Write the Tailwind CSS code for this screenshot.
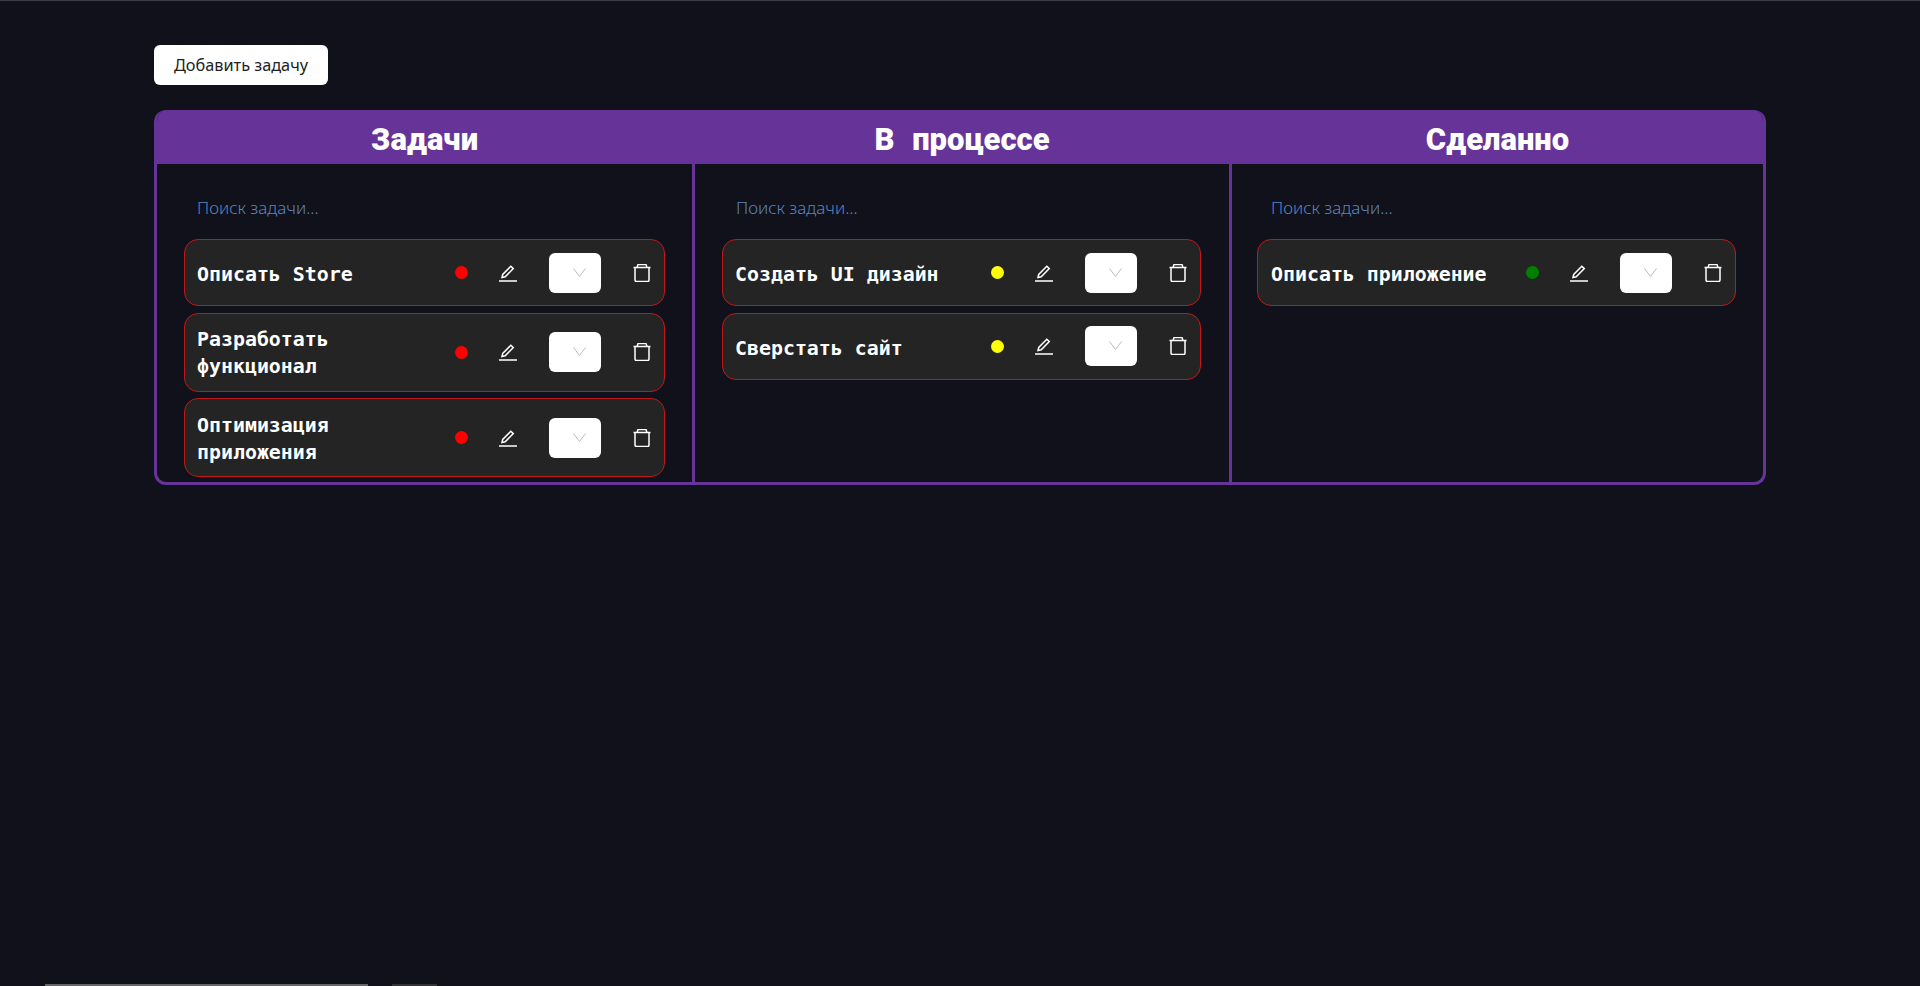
<!DOCTYPE html>
<html lang="ru">

<head>
    <meta charset="UTF-8">
    <meta name="viewport" content="width=device-width, initial-scale=1.0">
    <script src="https://cdn.jsdelivr.net/npm/@tailwindcss/browser@4"></script>
    <title>Задачи</title>
</head>

<body class="relative h-[986px] overflow-hidden bg-[#10111a] font-['Noto_Sans',sans-serif]">
    <div class="h-px bg-[#3d3d45]"></div>
    <main class="pl-[154px] pr-[154px] pt-[44px]">
        <button class="block w-[174px] h-[40px] rounded-[6px] bg-white text-[#222] text-[16.3px]">Добавить задачу</button>

        <section class="mt-[25px] w-[1612px] rounded-[12px] border-[3px] border-[#663399] border-t-0 overflow-hidden">
            <div class="grid grid-cols-[538px_537px_531px] h-[54px] bg-[#663399] text-white text-center font-['Roboto',sans-serif] font-black text-[31px] leading-[60px] [word-spacing:10px]">
                <h2 class="pr-[3px]">Задачи</h2>
                <h2 class="pr-[3px]">В процессе</h2>
                <h2>Сделанно</h2>
            </div>
            <div class="grid grid-cols-[538px_537px_531px] h-[318px]">
                <!-- Задачи -->
                <div class="pl-[27px] pt-[24px] border-r-[3px] border-[#663399]">
                    <input placeholder="Поиск задачи..." class="block w-full h-[38px] pl-[13px] bg-transparent text-[17px] font-light placeholder:text-[#5b84c0] outline-none" />
                    <div class="mt-[13px] flex flex-col gap-[6.5px]">
                        <div class="flex items-center w-[481px] h-[67px] pl-[12px] rounded-[14px] border border-[#c01818] bg-[#242424]">
                            <p class="w-[258px] pt-[4px] font-['DejaVu_Sans_Mono',monospace] font-bold text-[19.9px] leading-[27px] text-white">Описать Store</p>
                            <span class="w-[13px] h-[13px] rounded-full bg-[#ff0000]"></span>
                            <svg class="ml-[31px]" width="18" height="18" viewBox="0 0 18 18" fill="none" stroke="white" stroke-width="1.5"><path d="M3 13.5l.7-3L11.800 2.300l2.500 2.300-8.100 8.200-3.200.7zM0 17h18"/></svg>
                            <div class="ml-[32px] relative w-[52px] h-[40px] rounded-[6px] bg-white"><svg class="absolute left-[24px] top-[15px]" width="13" height="9" viewBox="0 0 13 9" fill="none" stroke="#bbb" stroke-width="1"><path d="M.5 .5l6 8 6-8"/></svg></div>
                            <svg class="ml-[32px]" width="18" height="18" viewBox="0 0 18 18" fill="none" stroke="white" stroke-width="1.5"><path d="M.5 3.500h17M4 3.500l1-3h8l1 3M2 3.500v12.500a1.500 1.500 0 0 0 1.500 1.500h11a1.500 1.500 0 0 0 1.500-1.500v-12.500"/></svg>
                        </div>
                        <div class="flex items-center w-[481px] h-[79px] pl-[12px] rounded-[14px] border border-[#c01818] bg-[#242424]">
                            <p class="w-[258px] pt-[2px] font-['DejaVu_Sans_Mono',monospace] font-bold text-[19.9px] leading-[27px] text-white">Разработать<br>функционал</p>
                            <span class="w-[13px] h-[13px] rounded-full bg-[#ff0000]"></span>
                            <svg class="ml-[31px]" width="18" height="18" viewBox="0 0 18 18" fill="none" stroke="white" stroke-width="1.5"><path d="M3 13.5l.7-3L11.800 2.300l2.500 2.300-8.100 8.200-3.200.7zM0 17h18"/></svg>
                            <div class="ml-[32px] relative w-[52px] h-[40px] rounded-[6px] bg-white"><svg class="absolute left-[24px] top-[15px]" width="13" height="9" viewBox="0 0 13 9" fill="none" stroke="#bbb" stroke-width="1"><path d="M.5 .5l6 8 6-8"/></svg></div>
                            <svg class="ml-[32px]" width="18" height="18" viewBox="0 0 18 18" fill="none" stroke="white" stroke-width="1.5"><path d="M.5 3.500h17M4 3.500l1-3h8l1 3M2 3.500v12.500a1.500 1.500 0 0 0 1.500 1.500h11a1.500 1.500 0 0 0 1.500-1.500v-12.500"/></svg>
                        </div>
                        <div class="flex items-center w-[481px] h-[79px] pl-[12px] rounded-[14px] border border-[#c01818] bg-[#242424]">
                            <p class="w-[258px] pt-[2px] font-['DejaVu_Sans_Mono',monospace] font-bold text-[19.9px] leading-[27px] text-white">Оптимизация<br>приложения</p>
                            <span class="w-[13px] h-[13px] rounded-full bg-[#ff0000]"></span>
                            <svg class="ml-[31px]" width="18" height="18" viewBox="0 0 18 18" fill="none" stroke="white" stroke-width="1.5"><path d="M3 13.5l.7-3L11.800 2.300l2.500 2.300-8.100 8.200-3.200.7zM0 17h18"/></svg>
                            <div class="ml-[32px] relative w-[52px] h-[40px] rounded-[6px] bg-white"><svg class="absolute left-[24px] top-[15px]" width="13" height="9" viewBox="0 0 13 9" fill="none" stroke="#bbb" stroke-width="1"><path d="M.5 .5l6 8 6-8"/></svg></div>
                            <svg class="ml-[32px]" width="18" height="18" viewBox="0 0 18 18" fill="none" stroke="white" stroke-width="1.5"><path d="M.5 3.500h17M4 3.500l1-3h8l1 3M2 3.500v12.500a1.500 1.500 0 0 0 1.500 1.500h11a1.500 1.500 0 0 0 1.500-1.500v-12.500"/></svg>
                        </div>
                    </div>
                </div>
                <!-- В процессе -->
                <div class="pl-[27px] pt-[24px] border-r-[3px] border-[#663399]">
                    <input placeholder="Поиск задачи..." class="block w-full h-[38px] pl-[14px] bg-transparent text-[17px] font-light placeholder:text-[#5b84c0] outline-none" />
                    <div class="mt-[13px] flex flex-col gap-[6.5px]">
                        <div class="flex items-center w-[479px] h-[67px] pl-[12px] rounded-[14px] border border-[#c01818] bg-[#242424]">
                            <p class="w-[256px] pt-[4px] font-['DejaVu_Sans_Mono',monospace] font-bold text-[19.9px] leading-[27px] text-white">Создать UI дизайн</p>
                            <span class="w-[13px] h-[13px] rounded-full bg-[#ffff00]"></span>
                            <svg class="ml-[31px]" width="18" height="18" viewBox="0 0 18 18" fill="none" stroke="white" stroke-width="1.5"><path d="M3 13.5l.7-3L11.800 2.300l2.500 2.300-8.100 8.200-3.200.7zM0 17h18"/></svg>
                            <div class="ml-[32px] relative w-[52px] h-[40px] rounded-[6px] bg-white"><svg class="absolute left-[24px] top-[15px]" width="13" height="9" viewBox="0 0 13 9" fill="none" stroke="#bbb" stroke-width="1"><path d="M.5 .5l6 8 6-8"/></svg></div>
                            <svg class="ml-[32px]" width="18" height="18" viewBox="0 0 18 18" fill="none" stroke="white" stroke-width="1.5"><path d="M.5 3.500h17M4 3.500l1-3h8l1 3M2 3.500v12.500a1.500 1.500 0 0 0 1.500 1.500h11a1.500 1.500 0 0 0 1.500-1.500v-12.500"/></svg>
                        </div>
                        <div class="flex items-center w-[479px] h-[67px] pl-[12px] rounded-[14px] border border-[#c01818] bg-[#242424]">
                            <p class="w-[256px] pt-[4px] font-['DejaVu_Sans_Mono',monospace] font-bold text-[19.9px] leading-[27px] text-white">Сверстать сайт</p>
                            <span class="w-[13px] h-[13px] rounded-full bg-[#ffff00]"></span>
                            <svg class="ml-[31px]" width="18" height="18" viewBox="0 0 18 18" fill="none" stroke="white" stroke-width="1.5"><path d="M3 13.5l.7-3L11.800 2.300l2.500 2.300-8.100 8.200-3.200.7zM0 17h18"/></svg>
                            <div class="ml-[32px] relative w-[52px] h-[40px] rounded-[6px] bg-white"><svg class="absolute left-[24px] top-[15px]" width="13" height="9" viewBox="0 0 13 9" fill="none" stroke="#bbb" stroke-width="1"><path d="M.5 .5l6 8 6-8"/></svg></div>
                            <svg class="ml-[32px]" width="18" height="18" viewBox="0 0 18 18" fill="none" stroke="white" stroke-width="1.5"><path d="M.5 3.500h17M4 3.500l1-3h8l1 3M2 3.500v12.500a1.500 1.500 0 0 0 1.500 1.500h11a1.500 1.500 0 0 0 1.500-1.500v-12.500"/></svg>
                        </div>
                    </div>
                </div>
                <!-- Сделанно -->
                <div class="pl-[25px] pt-[24px]">
                    <input placeholder="Поиск задачи..." class="block w-full h-[38px] pl-[14px] bg-transparent text-[17px] font-light placeholder:text-[#5b84c0] outline-none" />
                    <div class="mt-[13px] flex flex-col gap-[6.5px]">
                        <div class="flex items-center w-[479px] h-[67px] pl-[13px] rounded-[14px] border border-[#c01818] bg-[#242424]">
                            <p class="w-[255px] pt-[4px] font-['DejaVu_Sans_Mono',monospace] font-bold text-[19.9px] leading-[27px] text-white">Описать приложение</p>
                            <span class="w-[13px] h-[13px] rounded-full bg-[#008000]"></span>
                            <svg class="ml-[31px]" width="18" height="18" viewBox="0 0 18 18" fill="none" stroke="white" stroke-width="1.5"><path d="M3 13.5l.7-3L11.800 2.300l2.500 2.300-8.100 8.200-3.200.7zM0 17h18"/></svg>
                            <div class="ml-[32px] relative w-[52px] h-[40px] rounded-[6px] bg-white"><svg class="absolute left-[24px] top-[15px]" width="13" height="9" viewBox="0 0 13 9" fill="none" stroke="#bbb" stroke-width="1"><path d="M.5 .5l6 8 6-8"/></svg></div>
                            <svg class="ml-[32px]" width="18" height="18" viewBox="0 0 18 18" fill="none" stroke="white" stroke-width="1.5"><path d="M.5 3.500h17M4 3.500l1-3h8l1 3M2 3.500v12.500a1.500 1.500 0 0 0 1.500 1.500h11a1.500 1.500 0 0 0 1.500-1.500v-12.500"/></svg>
                        </div>
                    </div>
                </div>
            </div>
        </section>
    </main>

    <div class="absolute left-[45px] bottom-0 w-[323px] h-[2px] bg-[#666]"></div>
    <div class="absolute left-[392px] bottom-0 w-[45px] h-[2px] bg-[#333]"></div>
</body>

</html>
